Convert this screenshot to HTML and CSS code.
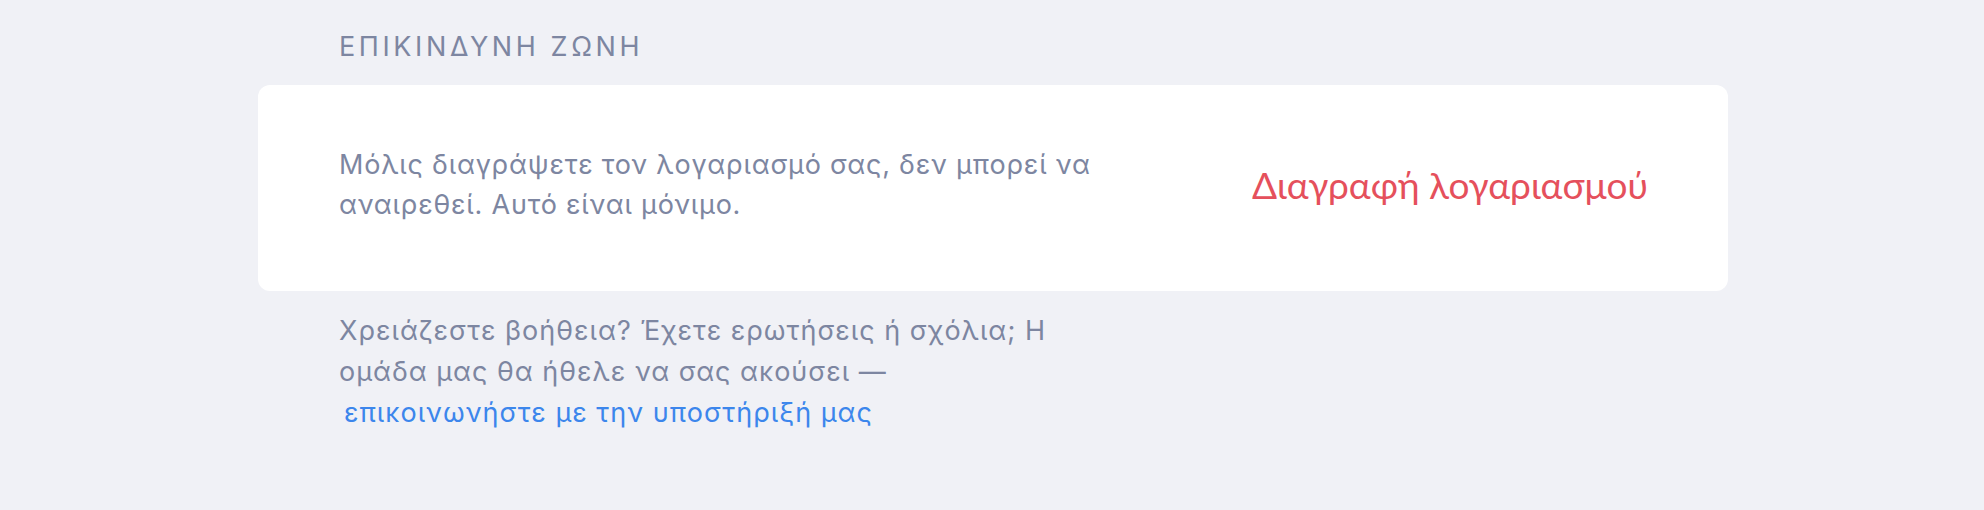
FILE: index.html
```html
<!DOCTYPE html>
<html lang="el">
<head>
<meta charset="utf-8">
<link rel="stylesheet" href="styles.css">
</head>
<body>
<main class="page">
  <h2 class="section-title">Επικίνδυνη ζώνη</h2>
  <section class="card">
    <p class="card-text">Μόλις διαγράψετε τον λογαριασμό σας, δεν μπορεί να αναιρεθεί. Αυτό είναι μόνιμο.</p>
    <button class="danger-btn" type="button">Διαγραφή λογαριασμού</button>
  </section>
  <p class="help">Χρειάζεστε βοήθεια? Έχετε ερωτήσεις ή σχόλια; Η ομάδα μας θα ήθελε να σας ακούσει — <a class="help-link" href="#">επικοινωνήστε με την υποστήριξή μας</a></p>
</main>
</body>
</html>
```
FILE: styles.css
```css
* { box-sizing: border-box; }
html, body { margin: 0; padding: 0; }
body {
  background: #f0f1f6;
  font-family: Inter, "Noto Sans", sans-serif;
  width: 1984px;
  height: 510px;
  overflow: hidden;
}
.page {
  width: 1470px;
  margin-left: 258px;
  padding-top: 30px;
}
.section-title {
  margin: 0 0 0 81px;
  font-size: 27px;
  font-weight: 400;
  letter-spacing: 3.6px;
  text-transform: uppercase;
  color: #7d86a1;
  line-height: 34px;
}
.card {
  margin-top: 21px;
  background: #ffffff;
  border-radius: 12px;
  display: flex;
  align-items: center;
  justify-content: space-between;
  padding: 60px 80px 66px 81px;
}
.card-text {
  margin: 0;
  max-width: 780px;
  font-size: 27px;
  letter-spacing: 0.8px;
  line-height: 40px;
  color: #7d86a1;
}
.danger-btn {
  background: none;
  border: 0;
  padding: 0;
  font-family: Lato, "Noto Sans", sans-serif;
  font-size: 37px;
  line-height: 44px;
  color: #e5505c;
  cursor: pointer;
}
.help {
  margin: 19px 0 0 81px;
  max-width: 780px;
  font-size: 27px;
  letter-spacing: 1px;
  line-height: 41px;
  color: #7d86a1;
}
.help-link {
  display: inline-block;
  margin-left: 5px;
  color: #3c86ec;
  text-decoration: none;
}
```
